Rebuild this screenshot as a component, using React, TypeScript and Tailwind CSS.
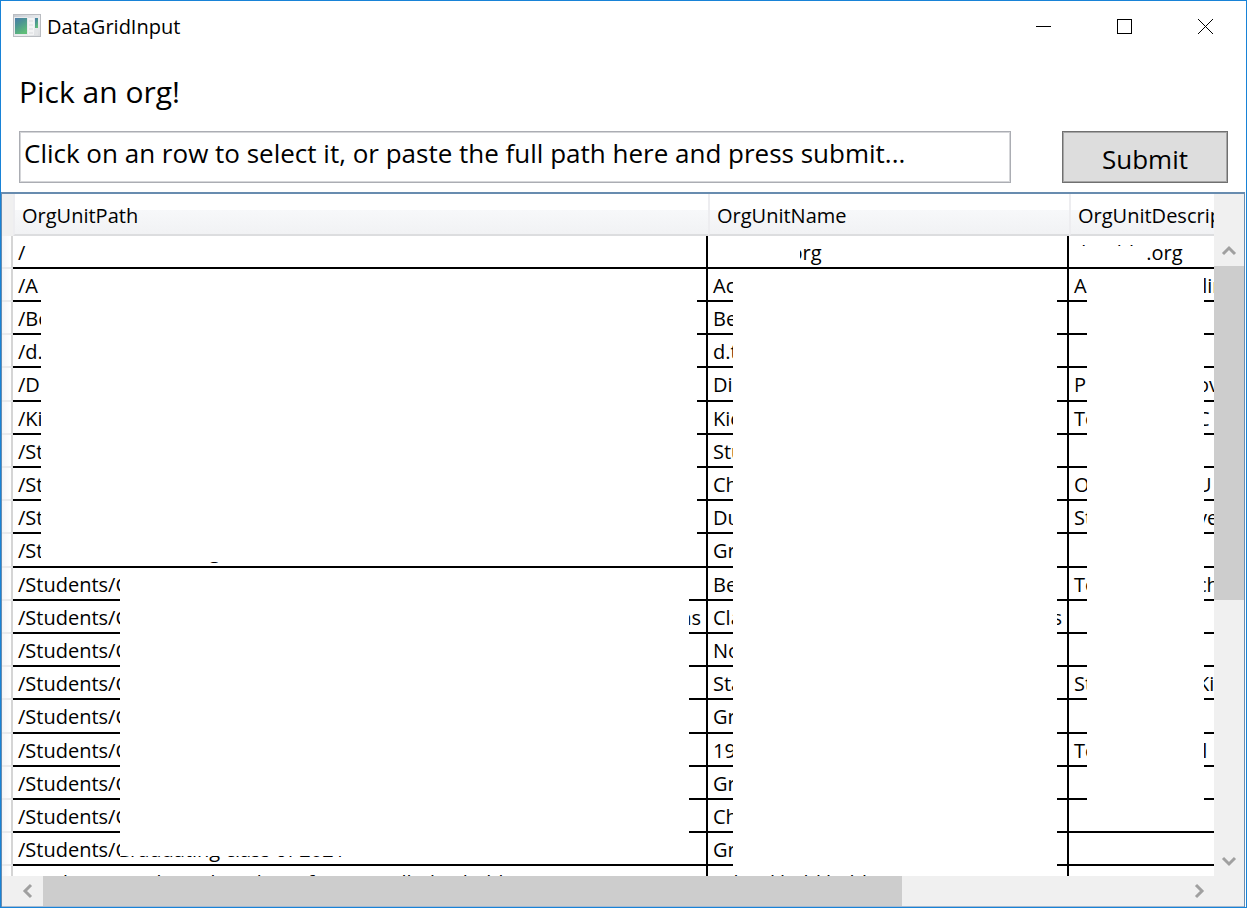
import React from 'react';

type Row = { path: string; pathEnd?: string; name: string; nameEnd?: string; desc?: string; descEnd?: string };

const rows: Row[] = [
  { path: '/', name: 'dcechln.org', desc: 'dcechln.org' },
  { path: '/A', name: 'Ac', desc: 'A', descEnd: ' lin' },
  { path: '/Be', name: 'Be' },
  { path: '/d.t', name: 'd.t' },
  { path: '/D', name: 'Di', desc: 'P', descEnd: 'ov' },
  { path: '/Kid', name: 'Kic', desc: 'Te', descEnd: 'C' },
  { path: '/Stu', name: 'Stu' },
  { path: '/Stu', name: 'Ch', desc: 'O', descEnd: 'U' },
  { path: '/Stu', name: 'Du', desc: 'Stu', descEnd: 've' },
  { path: '/Students/Graduating', name: 'Gr' },
  { path: '/Students/G', name: 'Be', desc: 'Te', descEnd: 'ch' },
  { path: '/Students/G', pathEnd: 'ns', name: 'Cla', nameEnd: 's' },
  { path: '/Students/G', name: 'No' },
  { path: '/Students/G', name: 'Sta', desc: 'Stu', descEnd: 'Kid' },
  { path: '/Students/G', name: 'Gr' },
  { path: '/Students/G', name: '19', desc: 'Te', descEnd: ' l' },
  { path: '/Students/G', name: 'Gr' },
  { path: '/Students/G', name: 'Ch' },
  { path: '/Students/Graduating class of 2021', name: 'Gr' },
  { path: '/Students/Graduated students from enrolled in held', name: 'School held held' },
];

const masks = [
  'left-[39px] top-[77px] h-[291px] w-[656px]',
  'left-[118px] top-[376px] h-[286px] w-[569px]',
  'left-[708px] top-[44px] h-[28px] w-[90px]',
  'left-[731px] top-[77px] h-[602px] w-[324px]',
  'left-[1070px] top-[52px] h-[20px] w-[75px]',
  'left-[1085px] top-[77px] h-[560px] w-[117px]',
];

function Chevron({ d }: { d: string }) {
  return (
    <svg width="16" height="16" viewBox="0 0 16 16" fill="none" stroke="#a0a0a0" strokeWidth="3" aria-hidden="true">
      <path d={d} />
    </svg>
  );
}

function AppIcon() {
  return (
    <svg width="28" height="24" viewBox="0 0 28 24" aria-hidden="true">
      <defs>
        <linearGradient id="pane" x1="0" y1="0" x2="0.5" y2="1">
          <stop offset="0" stopColor="#4a79ad" />
          <stop offset="0.45" stopColor="#4c9592" />
          <stop offset="1" stopColor="#5fbd79" />
        </linearGradient>
        <linearGradient id="frame" x1="0" y1="0" x2="1" y2="1">
          <stop offset="0" stopColor="#c3c8cf" />
          <stop offset="0.6" stopColor="#eef0f2" />
          <stop offset="1" stopColor="#d8dadd" />
        </linearGradient>
      </defs>
      <rect x="0.5" y="0.5" width="27" height="22" fill="url(#frame)" stroke="#b9bcc1" />
      <rect x="1.5" y="3.5" width="13" height="17" fill="url(#pane)" stroke="#e8eaec" />
      <rect x="15" y="4" width="6" height="17" fill="#f3f4f5" />
      <path d="M16 7h4M16 11h4M16 15h4M16 19h4" stroke="#d9dbde" strokeWidth="1" />
      <rect x="22" y="4" width="3" height="10" fill="url(#pane)" />
      <rect x="22" y="15" width="3" height="6" fill="#e3e5e7" />
    </svg>
  );
}

const caption = 'flex w-[81px] items-center justify-center';

function HeaderCell({ children }: { children: string }) {
  return (
    <th className="border-b-2 border-l-2 border-b-[#dcdddf] border-l-[#ededf0] bg-linear-to-b from-white from-40% via-[#f7f8fa] via-40% to-[#f1f2f4] px-[7px] pt-[4px] text-left font-normal">
      {children}
    </th>
  );
}

const cell = 'border-b-2 border-r-2 border-black p-0';
const inner = 'flex h-[29px] items-center overflow-hidden whitespace-nowrap pl-[5px] pt-[2px]';

export default function App() {
  return (
    <main className="flex h-screen flex-col overflow-hidden border border-[#1883d7] bg-white font-['Open_Sans','Noto_Sans',sans-serif] text-black">
      <header className="flex h-[50px] shrink-0 items-stretch">
        <div className="flex items-center gap-[6px] pl-3">
          <AppIcon />
          <h1 className="pt-[2px] text-[20px] leading-7">DataGridInput</h1>
        </div>
        <div className="ml-auto flex">
          <button className={caption} aria-label="Minimize">
            <svg width="15" height="15" stroke="black" fill="none" shapeRendering="crispEdges"><path d="M0 7.5h15" /></svg>
          </button>
          <button className={caption} aria-label="Maximize">
            <svg width="15" height="15" stroke="black" fill="none" shapeRendering="crispEdges"><path d="M.5 .5h14v14h-14z" /></svg>
          </button>
          <button className={caption} aria-label="Close">
            <svg width="15" height="15" stroke="black" fill="none"><path d="M0 0L15 15M15 0L0 15" /></svg>
          </button>
        </div>
      </header>

      <form className="shrink-0 px-[18px] pb-[9px]" onSubmit={(e) => e.preventDefault()}>
        <label htmlFor="org" className="flex h-[80px] items-center text-[30px]">Pick an org!</label>
        <div className="flex h-[52px] gap-[51px]">
          <input
            id="org"
            className="min-w-0 flex-1 border border-[#abadb3] px-1 pb-[7px] text-[26px] outline-none inset-shadow-[0_0_0_1px_#d5d6d9]"
            defaultValue="Click on an row to select it, or paste the full path here and press submit..."
          />
          <button type="submit" className="w-[166px] border border-[#707070] bg-[#dddddd] pt-[4px] text-[26px] inset-shadow-[0_0_0_1px_#a6a6a6]">Submit</button>
        </div>
      </form>

      <section className="mr-px flex min-h-0 flex-1 flex-col border-x border-t-2 border-[#688caf] text-[20px]">
        <div className="flex min-h-0 flex-1">
          <div className="relative min-w-0 flex-1 overflow-hidden">
            <table className="w-[1400px] table-fixed border-separate border-spacing-0">
              <colgroup>
                <col className="w-[11px]" />
                <col className="w-[695px]" />
                <col className="w-[361px]" />
                <col />
              </colgroup>
              <thead>
                <tr className="h-[42px]">
                  <td className="bg-[#f0f0f0]" />
                  <HeaderCell>OrgUnitPath</HeaderCell>
                  <HeaderCell>OrgUnitName</HeaderCell>
                  <HeaderCell>OrgUnitDescription</HeaderCell>
                </tr>
              </thead>
              <tbody>
                {rows.map((r, i) => (
                  <tr key={i} className="h-[33px] nth-[5n]:h-[34px]">
                    <td className="border-b-2 border-r-2 border-b-[#e9eaec] border-r-[#d5d5d5] bg-linear-to-r from-[#f4f5f7] to-white p-0" />
                    <td className={cell}>
                      <div className={inner}>
                        {r.path}
                        {r.pathEnd && <span className="ml-auto pr-[5px]">{r.pathEnd}</span>}
                      </div>
                    </td>
                    <td className={cell}>
                      <div className={inner}>
                        {r.name}
                        {r.nameEnd && <span className="ml-auto pr-[5px]">{r.nameEnd}</span>}
                      </div>
                    </td>
                    <td className={cell}>
                      <div className={inner}>
                        <span className="w-[123px]">{r.desc}</span>
                        <span className="whitespace-pre">{r.descEnd}</span>
                      </div>
                    </td>
                  </tr>
                ))}
              </tbody>
            </table>
            {masks.map((m) => (
              <div key={m} className={`absolute bg-white ${m}`} />
            ))}
          </div>
          <div className="flex w-[30px] shrink-0 flex-col bg-[#f0f0f0] pt-[42px]">
            <button className="flex h-[30px] items-center justify-center" aria-label="Scroll up"><Chevron d="M2 11L8 5L14 11" /></button>
            <div className="min-h-0 flex-1"><div className="h-[57.5%] bg-[#cdcdcd]" /></div>
            <button className="flex h-[30px] items-center justify-center" aria-label="Scroll down"><Chevron d="M2 5L8 11L14 5" /></button>
          </div>
        </div>
        <div className="flex h-[30px] shrink-0 bg-[#f0f0f0] pl-[11px] pr-[30px]">
          <button className="flex w-[30px] items-center justify-center" aria-label="Scroll left"><Chevron d="M11 2L5 8L11 14" /></button>
          <div className="min-w-0 flex-1"><div className="h-full w-[75.3%] bg-[#cdcdcd]" /></div>
          <button className="flex w-[30px] items-center justify-center" aria-label="Scroll right"><Chevron d="M5 2L11 8L5 14" /></button>
        </div>
        <div className="h-px shrink-0 bg-[#a5b9d0]" />
      </section>
    </main>
  );
}
